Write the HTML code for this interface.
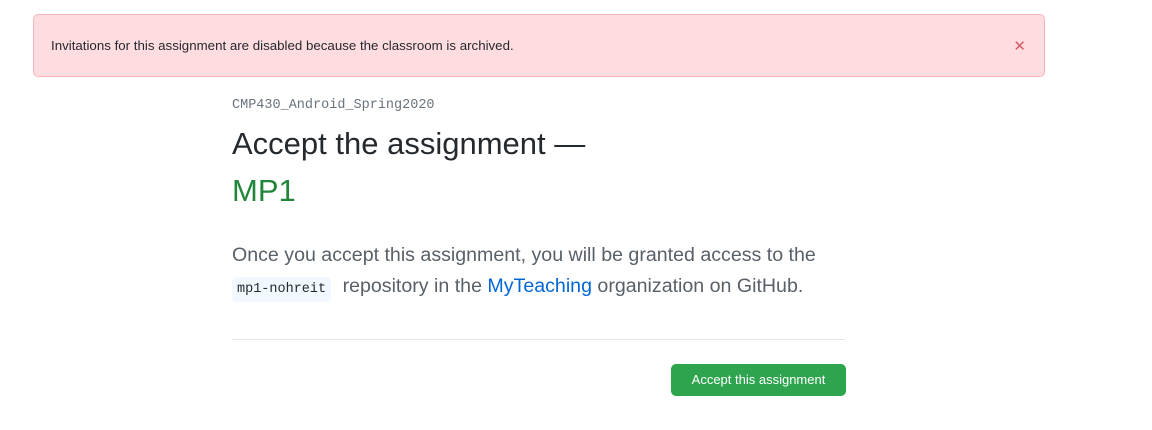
<!DOCTYPE html>
<html><head><style>
*{margin:0;padding:0;box-sizing:border-box}
body{width:1152px;height:430px;background:#fff;font-family:"Liberation Sans",sans-serif;position:relative;overflow:hidden}
.flash{position:absolute;left:33px;top:14px;width:1012px;height:63px;background:#ffdce0;border:1px solid #f5b5bd;border-radius:5px}
.flash span{position:absolute;left:17px;top:23px;font-size:13.3px;color:#24292e}
.x{position:absolute;right:18px;top:22px;color:#cb2431;font-size:15px;opacity:.7}
.org{position:absolute;left:232px;top:98px;font-family:"Liberation Mono",monospace;font-size:13.5px;color:#6a737d}
h1{position:absolute;left:232px;top:125px;font-weight:400;font-size:31px;color:#24292e;line-height:38px;white-space:nowrap}
.mp{position:absolute;left:232px;top:172px;font-size:31px;color:#22863a;line-height:38px}
p{position:absolute;left:232px;top:240px;width:700px;font-size:19.6px;line-height:31px;color:#586069;white-space:nowrap}
code{font-family:"Liberation Mono",monospace;font-size:13.5px;background:#f1f8ff;color:#24292e;padding:5px 5px;border-radius:4px;margin-right:6px}
a{color:#0366d6;text-decoration:none}
hr{position:absolute;left:232px;top:339px;width:613px;border:0;border-top:1px solid #e1e4e8}
.btn{position:absolute;left:671px;top:364px;width:175px;height:32px;background:#2ea44f;border:1px solid #28a745;border-radius:5px;color:#fff;font-size:13px;text-align:center;line-height:30px}
</style></head><body>
<div class="flash"><span>Invitations for this assignment are disabled because the classroom is archived.</span><div class="x">✕</div></div>
<div class="org">CMP430_Android_Spring2020</div>
<h1>Accept the assignment —</h1>
<div class="mp">MP1</div>
<p>Once you accept this assignment, you will be granted access to the<br><code>mp1-nohreit</code> repository in the <a>MyTeaching</a> organization on GitHub.</p>
<hr>
<div class="btn">Accept this assignment</div>
</body></html>
